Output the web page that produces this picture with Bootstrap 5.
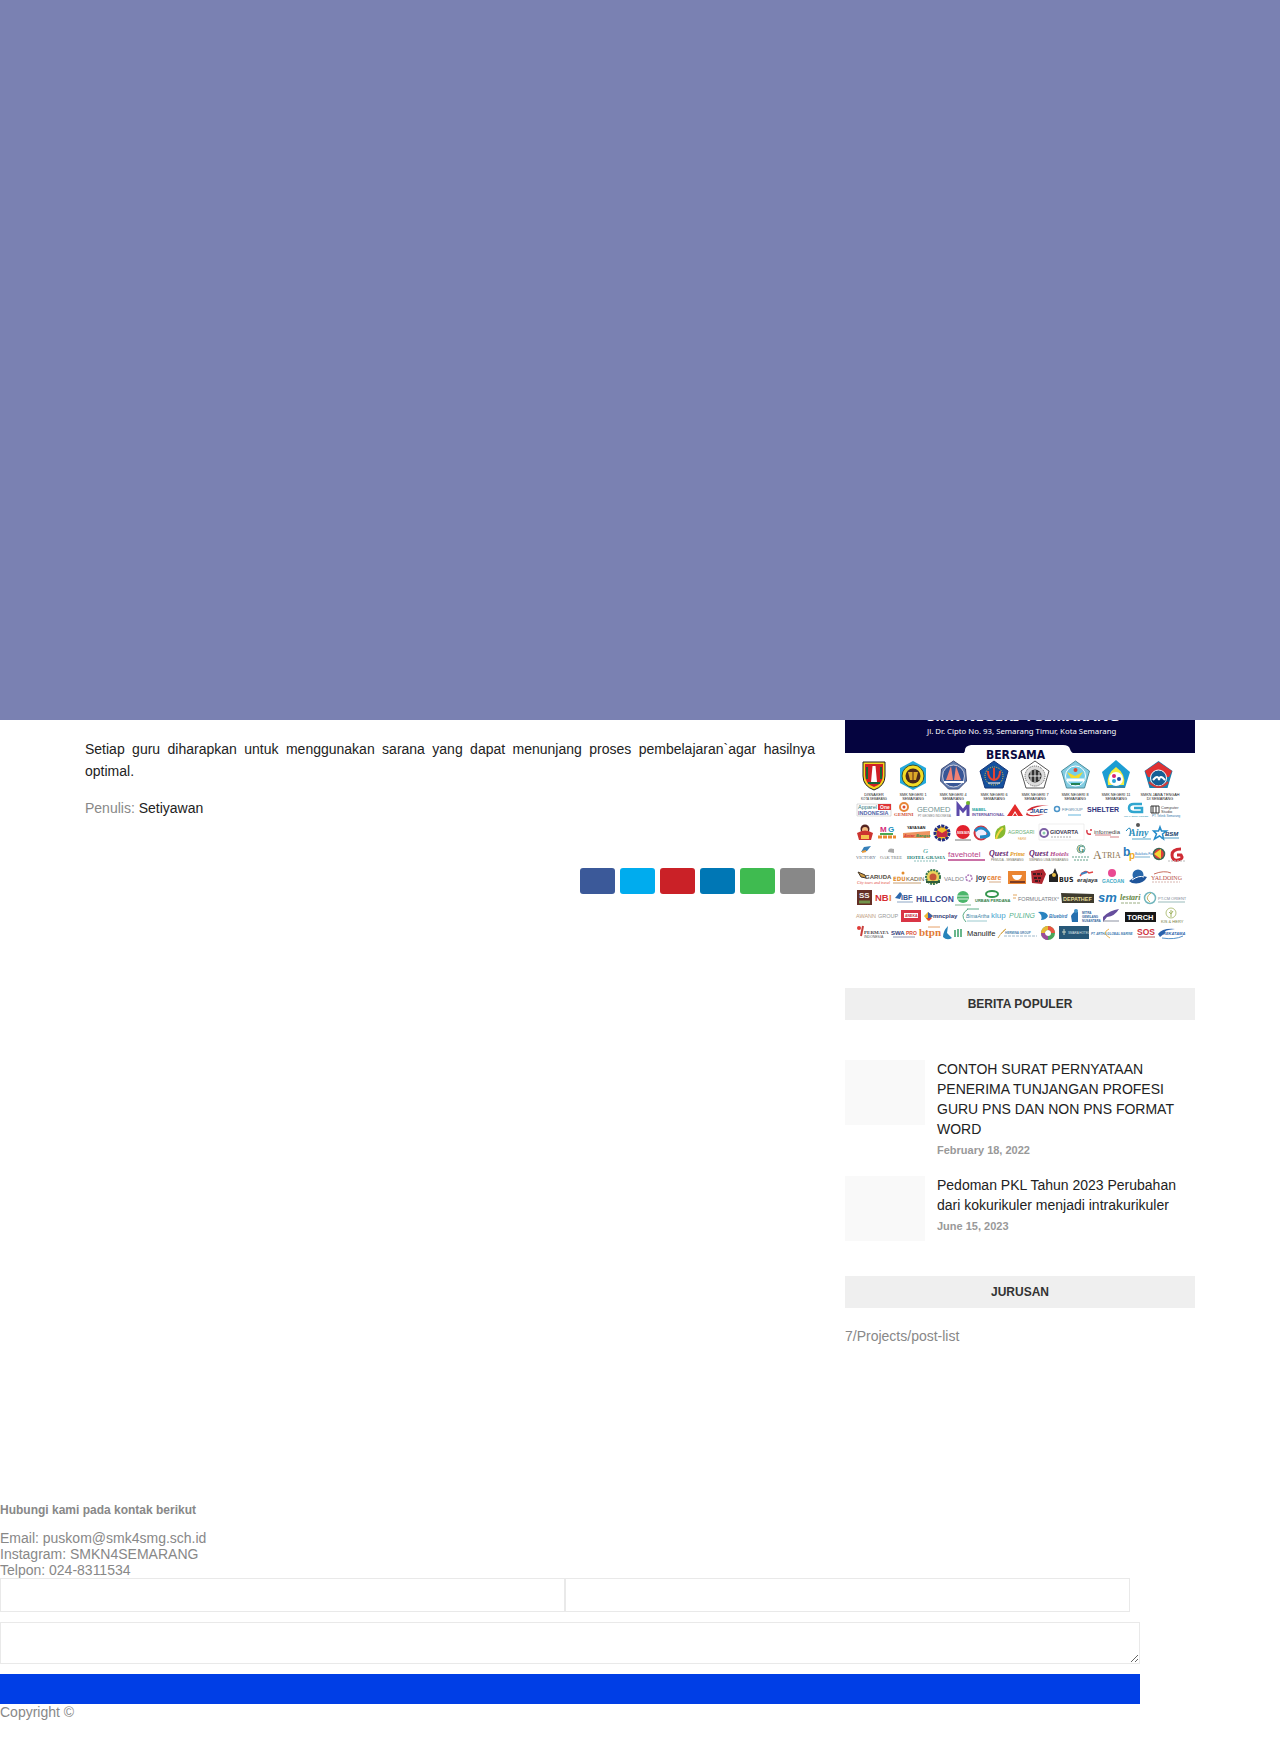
<!DOCTYPE html>
<html lang="id">
<head>
<meta charset="utf-8">
<meta name="viewport" content="width=device-width, initial-scale=1">
<title>SMKN 4 Semarang</title>
<link rel="stylesheet" href="https://cdn.jsdelivr.net/npm/bootstrap@5.3.0/dist/css/bootstrap.min.css">
<style>
body{font:14px/16px "Liberation Sans",Arial,sans-serif;color:#888;background:#fff}
a{text-decoration:none}
.splash{height:720px;background:#7a81b2}
.page-wrap{max-width:1140px;padding:0 15px;column-gap:30px}
.post-col{flex:1 1 0;min-width:0}
.side-col{width:350px}
.post-text{color:#222;line-height:22px;text-align:justify;padding-top:18px;margin-bottom:18px}
.author a,.news a{color:#222}
.share{gap:5px;margin-top:52px}
.share a{width:35px;height:26px;border-radius:3px}
.fb{background:#3b5999}.tw{background:#00acee}.pn{background:#ca2127}.li{background:#0077b5}.wa{background:#3fbb50}.em{background:#888}
.widget-title{background:#efefef;color:#333;font-size:12px;font-weight:700;line-height:32px;text-align:center;margin:0}
.poster{width:100%;margin-bottom:43px}
.news{padding:40px 0 35px;margin:0}
.news li{gap:12px}
.news li+li{margin-top:18px}
.news h3{font-size:14px;font-weight:400;line-height:20px;margin:-1px 0 3px}
.news time{font-size:11px;font-weight:700;line-height:16px;color:#999;display:block}
.thumb{width:80px;height:65px;background:#f9f9f9;flex:none}
.site-foot{margin-top:158px}
.foot-title{font-size:12px;font-weight:700;line-height:16px;margin:0 0 12px}
.contact{max-width:1140px}
.contact input,.contact textarea{border:1px solid #e9e9e9;border-radius:0;padding:5px 10px;background:#fff}
.contact input{width:calc(50% - 5px);height:34px}
.contact textarea{width:100%;height:42px;margin:10px 0;resize:both;display:block}
.contact button{width:100%;height:30px;border:0;background:#003ee6;display:block}
svg text{font-family:"Liberation Sans",Arial,sans-serif}
svg .cond{font-family:"DejaVu Sans Condensed","DejaVu Sans",sans-serif;font-weight:700}
svg .noto{font-family:"Noto Sans",sans-serif}
svg .ser{font-family:"Liberation Serif",serif}
svg .b{font-weight:700}
svg .i{font-style:italic}
@media(max-width:991px){.side-col{width:100%}.post-col{flex-basis:100%}}
</style>
<script src="https://cdn.jsdelivr.net/npm/bootstrap@5.3.0/dist/js/bootstrap.bundle.min.js"></script>
</head>
<body>
<div class="splash"></div>
<div class="page-wrap mx-auto d-flex flex-wrap">
<main class="post-col">
<p class="post-text">Setiap guru diharapkan untuk menggunakan sarana yang dapat menunjang proses pembelajaran`agar hasilnya optimal.</p>
<p class="author m-0">Penulis: <a href="#">Setiyawan</a></p>
<div class="share d-flex justify-content-end">
<a href="#" class="fb" aria-label="Facebook"></a><a href="#" class="tw" aria-label="Twitter"></a><a href="#" class="pn" aria-label="Pinterest"></a><a href="#" class="li" aria-label="LinkedIn"></a><a href="#" class="wa" aria-label="WhatsApp"></a><a href="#" class="em" aria-label="Email"></a>
</div>
</main>
<aside class="side-col">
<svg class="poster d-block" viewBox="845 720 350 225" role="img" aria-label="Mitra industri">
<path fill="#05043f" d="M845 700h350v53H845z"/>
<path fill="#fff" d="M960 754q5 0 5-4t6-5h92q6 0 7 4t5 5z"/>
<g fill="#fff"><text x="927" y="721" font-size="15" class="b noto">SMK NEGERI 4 SEMARANG</text><text x="927" y="734" font-size="7.800" class="noto">Jl. Dr. Cipto No. 93, Semarang Timur, Kota Semarang</text></g>
<text x="986" y="759" font-size="12" class="cond" fill="#0a0a40">BERSAMA</text>
<!-- school emblems -->
<g stroke-width="1">
<path d="M863 762h22v14q0 10-11 14q-11-4-11-14z" fill="#f4d51e" stroke="#222"/><path d="M865 764h18v11q0 9-9 12q-9-3-9-12z" fill="#cf1f25"/><path d="M872.500 766h3l1.500 16h-6z" fill="#fff"/><path d="M867 767v12M881 767v12M868 783h12" stroke="#176437" stroke-width="2"/>
<path d="M913 761l13 7v15l-13 7l-13-7v-15z" fill="#22a9dc"/><circle cx="913" cy="776" r="11" fill="#f3dc25" stroke="#39502e"/><circle cx="913" cy="776" r="7.500" fill="#4a291b"/><path d="M908 772h10l-2 8h-6z" fill="#daa729"/><path d="M913 770v10" stroke="#5d2914"/>
<path d="M953.500 761l12 8 1 12-8 8h-10l-8-8 1-12z" fill="#607daf" stroke="#404b78"/><circle cx="953.500" cy="776" r="11" fill="#385696" stroke="#ccd"/><path d="M946 780l5-14 2 14zM961 780l-5-14-2 14z" fill="#f18274"/><path d="M944 782h20" stroke="#fff" stroke-width="2"/>
<path d="M994 761l14 10-5 17h-18l-5-17z" fill="#14519e" stroke="#173676"/><circle cx="994" cy="776" r="9" fill="#154a94" stroke="#e9ca3f" stroke-dasharray="1 1"/><path d="M994 768v12M988 771q0 8 6 9 6-1 6-9" stroke="#e74331" stroke-width="2" fill="none"/><path d="M988 783h12" stroke="#fff"/>
<path d="M1035 761l14 10-5 17h-18l-5-17z" fill="#fff" stroke="#555"/><circle cx="1035" cy="776" r="10" fill="#ddd" stroke="#555" stroke-dasharray="1 1"/><circle cx="1035" cy="776" r="6.500" fill="#333"/><path d="M1031 771v10m4-11v12m4-10v8M1029 776h12" stroke="#eee"/>
<path d="M1075.500 761l14 10-5 17h-18l-5-17z" fill="#82cce2" stroke="#508e9d"/><circle cx="1075.500" cy="776" r="10" fill="#74cde7" stroke="#fff"/><path d="M1067 772l8 4 8-4-4 6h-8z" fill="#f5db2c"/><path d="M1067 780h17" stroke="#fff" stroke-width="3"/><path d="M1071 784h9" stroke="#238153" stroke-width="2"/><circle cx="1075.500" cy="770" r="2" fill="#d84835"/>
<path d="M1116 760l14 12-5 16h-18l-5-16z" fill="#1c9dd3"/><path d="M1116 767q10 7 8 18h-16q-2-11 8-18z" fill="#f7ed3f"/><circle cx="1116" cy="779" r="7" fill="#fff"/><circle cx="1114" cy="776" r="2" fill="#da2374"/><circle cx="1119" cy="779" r="2" fill="#2549a5"/><circle cx="1114" cy="781" r="2" fill="#27a5da"/><path d="M1107 787h18" stroke="#4f7480"/>
<path d="M1158.500 761l14 10-5 17h-18l-5-17z" fill="#197fae"/><path d="M1145 771l13.500-9 13.500 9-3 6h-21z" fill="#df3133"/><circle cx="1158.500" cy="778" r="8" fill="#155f95" stroke="#fff"/><path d="M1153 780q5-6 6 0 1-6 6 0" stroke="#fff" stroke-width="2" fill="none"/><path d="M1149 782q10 10 19 0" fill="none" stroke="#cf3b3a" stroke-width="2"/>
</g>
<g font-size="3.800" text-anchor="middle" fill="#222"><text x="874" y="796">DISNAKER</text><text x="874" y="800" font-size="3">KOTA SEMARANG</text><text x="913" y="796">SMK NEGERI 1</text><text x="913" y="800">SEMARANG</text><text x="953" y="796">SMK NEGERI 4</text><text x="953" y="800">SEMARANG</text><text x="994" y="796">SMK NEGERI 6</text><text x="994" y="800">SEMARANG</text><text x="1035" y="796">SMK NEGERI 7</text><text x="1035" y="800">SEMARANG</text><text x="1075" y="796">SMK NEGERI 8</text><text x="1075" y="800">SEMARANG</text><text x="1116" y="796">SMK NEGERI 11</text><text x="1116" y="800">SEMARANG</text><text x="1160" y="796">SMKN JAWA TENGAH</text><text x="1160" y="800">DI SEMARANG</text></g>
<!-- partners, row 1 -->
<path d="M857 804h34v12h-34z" fill="#fff" stroke="#bbb" stroke-width=".5"/><path d="M878 804h13v6h-13z" fill="#df3437"/><text x="858" y="809" font-size="5.500" fill="#347b7f">Apparel</text><text x="880" y="809" font-size="5" fill="#fff" class="b">One</text><text x="858" y="815" font-size="5.500" fill="#5366aa" class="b">INDONESIA</text>
<circle cx="904" cy="807" r="4" fill="none" stroke="#e88738" stroke-width="2"/><circle cx="904" cy="807" r="1.500" fill="#dd4c2f"/><text x="894" y="816" font-size="5" class="ser b" fill="#cf4d35">GEMINI</text>
<text x="917" y="812" font-size="7.500" fill="#6f9191">GEOMED</text><text x="918" y="817" font-size="2.800" fill="#777">PT GEOMED INDONESIA</text>
<path d="M958 816v-11l5 6 5-6v11" fill="none" stroke="#5b49aa" stroke-width="3"/><circle cx="968" cy="803" r="2" fill="#70b52a"/><text x="972" y="811" font-size="4" class="b" fill="#22a4a0">MABEL</text><text x="972" y="816" font-size="4" class="b" fill="#6656a1">INTERNATIONAL</text>
<path d="M1015 804l8 12h-5l-3-5-3 5h-5z" fill="#e42b2b"/><path d="M1013 816l2-3 2 3z" fill="#e42b2b"/>
<path d="M1027 811q3-6 22-6-16 2-17 5M1027 812q0 5 17 2-10 4-18 1z" fill="#d22c35"/><text x="1030" y="813" font-size="6" class="b i" fill="#183d82">JIAEC</text>
<circle cx="1057" cy="809" r="2.500" fill="none" stroke="#4b95c9" stroke-width="1.500"/><text x="1062" y="811" font-size="4" fill="#537fa3">FIFGROUP</text><path d="M1068 815h13" stroke="#64b5dc"/>
<text x="1087" y="812" font-size="7" class="b" fill="#31347e">SHELTER</text>
<path d="M1142 804h-8q-5 0-5 4t5 4h8v-4h-8" fill="none" stroke="#30a6cf" stroke-width="2.500"/><text x="1124" y="817" font-size="2.500" fill="#248bae">CCI LABORATORIES</text>
<path d="M1151 806h8v7h-8zm2 0v7m3-7v7" fill="none" stroke="#333"/><text x="1161" y="809" font-size="4" fill="#444">Computer</text><text x="1161" y="813" font-size="4" fill="#444">Studio</text><text x="1152" y="817" font-size="3" fill="#3478ac">PT. Teknik Semarang</text>
<!-- row 2 -->
<circle cx="865" cy="829" r="4.500" fill="#542220"/><circle cx="865" cy="830" r="3" fill="#f4bd83"/><path d="M857 833q8-5 16 0l-2 7h-12z" fill="#cc332f"/><path d="M861 835h8v4h-8z" fill="#f3c14d"/>
<text x="880" y="832" font-size="8" class="b" fill="#d52b79">M</text><text x="888" y="832" font-size="8" class="b" fill="#208ec0">G</text><path d="M878 837h18" stroke="#e98a30" stroke-width="3" stroke-dasharray="4 1"/><path d="M880 834h13" stroke="#4ba953" stroke-width="2"/>
<text x="907" y="829" font-size="4" class="b" fill="#222">YAYASAN</text><path d="M903 833l27-2v7h-27z" fill="#ee9561"/><text x="904" y="837" font-size="4" class="b i" fill="#d53438">Antar</text><text x="916" y="837" font-size="4" class="b i" fill="#2b904c">Bangsa</text>
<circle cx="942" cy="833" r="7" fill="#f4bf29" stroke="#242f83" stroke-width="3" stroke-dasharray="3 1"/><path d="M937 830l5 3 5-3v7h-10z" fill="#c92c40"/>
<circle cx="963" cy="832" r="7" fill="#e2212d"/><text x="957" y="834" font-size="4" class="b i" fill="#fff">NISSIN</text><path d="M955 840h16" stroke="#777"/>
<circle cx="981" cy="833" r="6.500" fill="#eef" stroke="#d4333c" stroke-width="2"/><path d="M975 831q6-6 12 0t-7 6" fill="none" stroke="#208ac8" stroke-width="3"/>
<path d="M995 836q0-9 10-11 3 14-10 14z" fill="#87b92e"/><path d="M996 839q2-7 7-11" stroke="#f5d543" stroke-width="2" fill="none"/><text x="1008" y="834" font-size="5" fill="#67ae72">AGROSARI</text><text x="1018" y="840" font-size="3" fill="#e9ae59">FARM</text>
<circle cx="1044" cy="833" r="4" fill="none" stroke="#7c5fa4" stroke-width="2"/><circle cx="1044" cy="833" r="1.500" fill="#8ca"/><text x="1050" y="834" font-size="5.500" class="b" fill="#403953">GIOVARTA</text><path d="M1051 837h21" stroke="#aaa" stroke-dasharray="2 1"/><path d="M1039 824h45v16h-45z" fill="none" stroke="#ddd" stroke-width=".5"/>
<path d="M1087 830q-1 5 4 4m-1-4h2" stroke="#d93643" fill="none" stroke-width="1.500"/><text x="1094" y="834" font-size="6" fill="#444">infomedia</text><path d="M1095 835h16m-1 2h9" stroke="#c34b50" stroke-width=".7"/>
<circle cx="1138" cy="825" r="2" fill="#555"/><path d="M1126 831q6-8 4 5" stroke="#1986bd" stroke-width="1" fill="none"/><text x="1129" y="836" font-size="10" class="ser i b" fill="#318fbc">Ainy</text><path d="M1132 839h19" stroke="#56a9cc"/>
<path d="M1160 827l1.500 4h5l-4 3 1 5-4-3-5 3 2-5-3-3h5z" fill="none" stroke="#258bc9" stroke-width="1.500"/><text x="1165" y="836" font-size="6" class="b i" fill="#183f6a">BSM</text><path d="M1161 838h18" stroke="#4a9ac4"/>
<!-- row 3 -->
<path d="M861 852l3-5 7-1-4 5z" fill="#3780b9"/><path d="M862 852l4-1" stroke="#e99c3e" stroke-width="2"/><text x="856" y="859" font-size="4.500" class="ser" fill="#586d82">VICTORY</text>
<path d="M888 852q0-5 6-3v4z" fill="#aaa"/><text x="880" y="859" font-size="4.500" class="ser" fill="#777">OAK TREE</text>
<text x="923" y="853" font-size="7" class="ser i" fill="#269189">G</text><text x="907" y="859" font-size="5" class="ser b" fill="#197b71">HOTEL GRASIA</text><path d="M914 861h23" stroke="#5da6a1" stroke-dasharray="2 1" stroke-width=".7"/>
<text x="948" y="857" font-size="8" fill="#b84189">favehotel</text><path d="M948 860h37" stroke="#b84189" stroke-width="1.500"/>
<text x="989" y="856" font-size="8" class="ser i b" fill="#65246e">Quest</text><text x="1010" y="856" font-size="6" class="ser i b" fill="#e49a25">Prime</text><text x="991" y="861" font-size="3" fill="#776">PEMUDA - SEMARANG</text>
<text x="1029" y="856" font-size="8" class="ser i b" fill="#65246e">Quest</text><text x="1050" y="856" font-size="7" class="ser i b" fill="#b34d8e">Hotels</text><text x="1029" y="861" font-size="3" fill="#776">SIMPANG LIMA SEMARANG</text>
<circle cx="1081" cy="849" r="4" fill="none" stroke="#35805f" stroke-width=".7"/><text x="1078" y="852" font-size="8" class="ser b" fill="#35805f">G</text><path d="M1072 857h18m-16 3h14" stroke="#61a088" stroke-dasharray="2 1"/>
<text x="1093" y="859" font-size="12" class="ser" fill="#8c744f">A</text><text x="1102" y="858" font-size="8" class="ser" fill="#8c744f">TRIA</text>
<text x="1123" y="856" font-size="12" class="b" fill="#2979bd">b</text><text x="1129" y="859" font-size="10" class="b" fill="#efac23">p</text><text x="1135" y="855" font-size="3" fill="#2979bd">Balaikota Pool</text><path d="M1135 857h15" stroke="#76afcf"/>
<circle cx="1159" cy="854" r="5.500" fill="#e13d38" stroke="#3a6756" stroke-width="1.500"/><path d="M1154 854l7-5v10z" fill="#f2d735"/>
<path d="M1181 849q-9 0-9 6t6 5 3-5h-4" fill="none" stroke="#cf2c35" stroke-width="3"/><path d="M1168 861h17" stroke="#bbb" stroke-dasharray="2 1"/>
<!-- row 4 -->
<path d="M858 872l7 3 1 3-5-1z" fill="#cf9b42" stroke="#46392c"/><text x="865" y="879" font-size="6" class="b" fill="#534c43">GARUDA</text><text x="857" y="884" font-size="4" class="ser i" fill="#df4c39">City tours and travel</text>
<text x="893" y="881" font-size="6" fill="#e38b2d" class="cond">EDU</text><text x="906" y="881" font-size="6" fill="#675334">KADIN</text><path d="M893 883h28" stroke="#c79e70"/><circle cx="903" cy="873" r="1.500" fill="#e38b2d"/>
<circle cx="933" cy="877" r="7" fill="#e8d35a" stroke="#37764f" stroke-width="2" stroke-dasharray="2 1"/><circle cx="933" cy="877" r="3.500" fill="#c75638"/><path d="M926 882h14" stroke="#315d3b" stroke-width="2"/>
<text x="944" y="881" font-size="6" fill="#808188">VALDO</text><circle cx="969" cy="878" r="3" fill="none" stroke="#ae79ba" stroke-width="1.500" stroke-dasharray="2 1"/>
<text x="976" y="880" font-size="7" class="b" fill="#303448">joy</text><text x="987" y="880" font-size="7" class="b" fill="#e78336">care</text><path d="M989 882h12" stroke="#d6aa84"/>
<path d="M1008 871h18v13h-18z" fill="#eb8531"/><path d="M1012 875h10q-1 5-5 5t-5-5z" fill="#fff"/><path d="M1010 882h15" stroke="#7d3c23" stroke-width="2"/>
<path d="M1031 871l12-2 3 5-4 10-10-1z" fill="#af2730"/><path d="M1033 874h9m-8 4h8m-7 3h5" stroke="#40191f" stroke-width="2" stroke-dasharray="3 1"/>
<path d="M1049 882v-7l4-2 2-5 2 5 1 2v7z" fill="#222"/><circle cx="1054" cy="875" r="2" fill="#e7bc46"/><text x="1059" y="882" font-size="7" class="cond" fill="#252627">BUS</text>
<path d="M1080 876q5-7 9-3l4-1" fill="none" stroke="#e24645" stroke-width="1.500"/><path d="M1081 874l6-2" stroke="#3f82c0" stroke-width="2"/><text x="1077" y="882" font-size="6" class="b i" fill="#2d3136">erajaya</text>
<circle cx="1112" cy="873" r="4" fill="#e94992"/><text x="1102" y="883" font-size="5" class="b" fill="#42abc6">GACOAN</text>
<circle cx="1138" cy="875" r="5.500" fill="#2867aa"/><path d="M1129 881q9-7 18-4-4 8-15 6z" fill="#1e549a"/><path d="M1132 880q7-5 12-3" stroke="#fff" fill="none"/>
<path d="M1154 874q10-4 17-1" stroke="#ca7061" fill="none"/><text x="1151" y="880" font-size="6" class="ser" fill="#b85147">YALDOING</text><path d="M1152 882h28" stroke="#d7b6b0" stroke-dasharray="2 1"/>
<!-- row 5 -->
<path d="M857 890h15v15h-15z" fill="#642e25"/><text x="859" y="898" font-size="8" class="b" fill="#eee">SS</text><path d="M859 902h11" stroke="#71944b" stroke-width="3"/>
<text x="875" y="901" font-size="9.500" class="b" fill="#d62e34">NB</text><text x="889" y="901" font-size="9.500" class="b" fill="#e78b32">I</text>
<path d="M895 898l5-6 2 2-2 5z" fill="#2c68ad"/><text x="901" y="900" font-size="7" class="b" fill="#315491">IBF</text><path d="M897 902h16" stroke="#8da6c5"/>
<text x="916" y="902" font-size="8.500" class="b" fill="#39458f">HILLCON</text>
<circle cx="963" cy="897" r="6" fill="#4bb66b"/><path d="M957 896h12m-11 3h10" stroke="#fff" stroke-width=".8"/><path d="M955 905h16" stroke="#84b793"/>
<ellipse cx="992" cy="894" rx="6" ry="3" fill="none" stroke="#35964e" stroke-width="2"/><text x="975" y="902" font-size="4" class="b" fill="#347e49">URBAN PERDANA</text>
<path d="M1013 895h4m-4 3h3" stroke="#e3a65e"/><text x="1018" y="901" font-size="5.500" fill="#777b7f">FORMULATRIX°</text>
<path d="M1061 893l33 1v9h-32z" fill="#3e3b2e"/><text x="1063" y="901" font-size="5.500" class="b" fill="#e8df9d">DEPATHEF</text>
<text x="1098" y="902" font-size="13" class="b i" fill="#267aba">sm</text>
<text x="1120" y="900" font-size="8" class="ser i b" fill="#648744">lestari</text><path d="M1121 903h20" stroke="#9aad82" stroke-dasharray="3 1"/>
<circle cx="1150" cy="898" r="5.500" fill="none" stroke="#72b6bd" stroke-width="1.500"/><path d="M1151 893q-7 5-1 9" stroke="#c3b25e" fill="none"/><text x="1158" y="900" font-size="4" fill="#818896">PT.CM ORIENT</text><path d="M1158 902h27" stroke="#9bb"/>
<!-- row 6 -->
<text x="856" y="918" font-size="5.500" fill="#c1a080">AWANN</text><text x="878" y="918" font-size="5.500" fill="#999">GROUP</text>
<path d="M901 910h20v12h-20z" fill="#d93545"/><path d="M904 913h14v5h-14z" fill="#fff"/><text x="905" y="917" font-size="3.500" class="b" fill="#c53445">ANEKA</text>
<path d="M924 916l4-4 5 4-5 5z" fill="#efb733"/><path d="M928 912l5 4-5 4z" fill="#3c5fad"/><path d="M926 918l3 3 3-3z" fill="#db4036"/><text x="933" y="918" font-size="6" class="b" fill="#313c75">mncplay</text>
<path d="M968 909q-9 6-2 13M967 909h12" stroke="#5cad86" fill="none"/><text x="966" y="918" font-size="5" class="i" fill="#3a83a4">BimaArtha</text><path d="M967 921h20" stroke="#9bcacf"/>
<text x="991" y="918" font-size="8" fill="#47a4d0">klup</text>
<text x="1009" y="918" font-size="7" fill="#56b18b" class="i">PULING</text>
<path d="M1038 912q8-1 10 4-2 4-7 4 2-5-3-8z" fill="#2a83c0"/><text x="1049" y="918" font-size="4.500" class="b i" fill="#3879b6">Bluebird</text>
<path d="M1071 916q3-6 7-4v10h-6z" fill="#256fae"/><circle cx="1076" cy="911" r="2" fill="#3f91c7"/><text x="1082" y="914" font-size="3" class="b" fill="#3566a0">MITRA</text><text x="1082" y="918" font-size="3" class="b" fill="#3566a0">GEMILANG</text><text x="1082" y="922" font-size="3" class="b" fill="#3566a0">NUSANTARA</text>
<path d="M1103 917q7-7 16-8-4 7-12 8l-4 5z" fill="#664e9d"/><path d="M1103 921h16" stroke="#8b91a2"/>
<path d="M1125 912h31v10h-31z" fill="#171717"/><text x="1127" y="920" font-size="7.500" class="b" fill="#fff">TORCH</text>
<circle cx="1171" cy="913" r="5" fill="none" stroke="#a2b463" stroke-width=".8"/><path d="M1171 910v7m-2-5l2 2 2-3" stroke="#a2b463" fill="none"/><text x="1161" y="923" font-size="4" fill="#747d43">KIS &amp; HERY</text>
<!-- row 7 -->
<circle cx="859" cy="928" r="2" fill="#df3c37"/><path d="M863 926l-2 10" stroke="#c73d3b" stroke-width="2"/><text x="864" y="934" font-size="5" class="ser b" fill="#4c474c">PERMATA</text><text x="864" y="938" font-size="3.500" fill="#555">INDONESIA</text>
<text x="891" y="935" font-size="6" class="b" fill="#343e7a">SWA</text><text x="906" y="935" font-size="5" class="b" fill="#db4f37">PRO</text><path d="M893 937h22" stroke="#8c93b0"/>
<text x="919" y="936" font-size="11" class="ser b" fill="#e27a37">btpn</text><path d="M928 927h12" stroke="#e6a068"/>
<path d="M948 926l-1 7 5 5q-5 3-9-1 0-6 5-11z" fill="#2782ba"/><path d="M955 930v7m3-8v8m3-8v8" stroke="#39a067" stroke-width="1.500"/>
<text x="967" y="936" font-size="7.500" fill="#222">Manulife</text>
<path d="M998 938q5-8 8-9l-5 5" stroke="#d9ae58" fill="none"/><text x="1005" y="934" font-size="3" class="b" fill="#4e82ac">HERMINA GROUP</text><path d="M1004 936h33" stroke="#9db8ca" stroke-dasharray="3 1"/>
<circle cx="1048" cy="933" r="5" fill="none" stroke="#48a559" stroke-width="4"/><path d="M1048 928a5 5 0 015 5" stroke="#e95341" stroke-width="4" fill="none"/><path d="M1043 933a5 5 0 015-5" stroke="#e7b835" stroke-width="4" fill="none"/><path d="M1043 933a5 5 0 005 5" stroke="#9c4c9b" stroke-width="4" fill="none"/>
<path d="M1059 926h30v13h-30z" fill="#275878"/><path d="M1064 929v6m-2-3h4" stroke="#c9d4c3"/><text x="1068" y="934" font-size="3" fill="#dce5e7">SMARA HOTEL</text>
<text x="1091" y="935" font-size="3" class="b i" fill="#3b7ab1">PT. ARTHA GLOBAL MARINE</text><path d="M1109 929q-8 4 1 9" fill="none" stroke="#eab352"/>
<text x="1137" y="935" font-size="8.500" class="b" fill="#d0333e">SOS</text><path d="M1138 937h17" stroke="#b55"/>
<path d="M1158 934q4-6 17-5-12 1-10 4l-5 4z" fill="#2962ad"/><text x="1163" y="935" font-size="4" class="b i" fill="#2d65ad">REKATAMA</text><path d="M1162 938q13 2 21-2" stroke="#5592c9" fill="none"/>
</svg>
<h2 class="widget-title">BERITA POPULER</h2>
<ul class="news list-unstyled">
<li class="d-flex align-items-start"><a href="#" class="thumb" aria-label="Contoh surat pernyataan"></a><div><h3><a href="#">CONTOH SURAT PERNYATAAN PENERIMA TUNJANGAN PROFESI GURU PNS DAN NON PNS FORMAT WORD</a></h3><time datetime="2022-02-18">February 18, 2022</time></div></li>
<li class="d-flex align-items-start"><a href="#" class="thumb" aria-label="Pedoman PKL"></a><div><h3><a href="#">Pedoman PKL Tahun 2023 Perubahan dari kokurikuler menjadi intrakurikuler</a></h3><time datetime="2023-06-15">June 15, 2023</time></div></li>
</ul>
<h2 class="widget-title">JURUSAN</h2>
<p class="mb-0 pt-1 mt-3">7/Projects/post-list</p>
</aside>
</div>
<footer class="site-foot">
<h2 class="foot-title">Hubungi kami pada kontak berikut</h2>
<div>Email: puskom@smk4smg.sch.id<br>Instagram: SMKN4SEMARANG<br>Telpon: 024-8311534</div>
<form class="contact">
<div class="d-flex"><input type="text" aria-label="Nama"><input type="email" aria-label="Email"></div>
<textarea aria-label="Pesan"></textarea>
<button type="button" aria-label="Kirim"></button>
</form>
<div>Copyright ©</div>
</footer>
</body>
</html>
